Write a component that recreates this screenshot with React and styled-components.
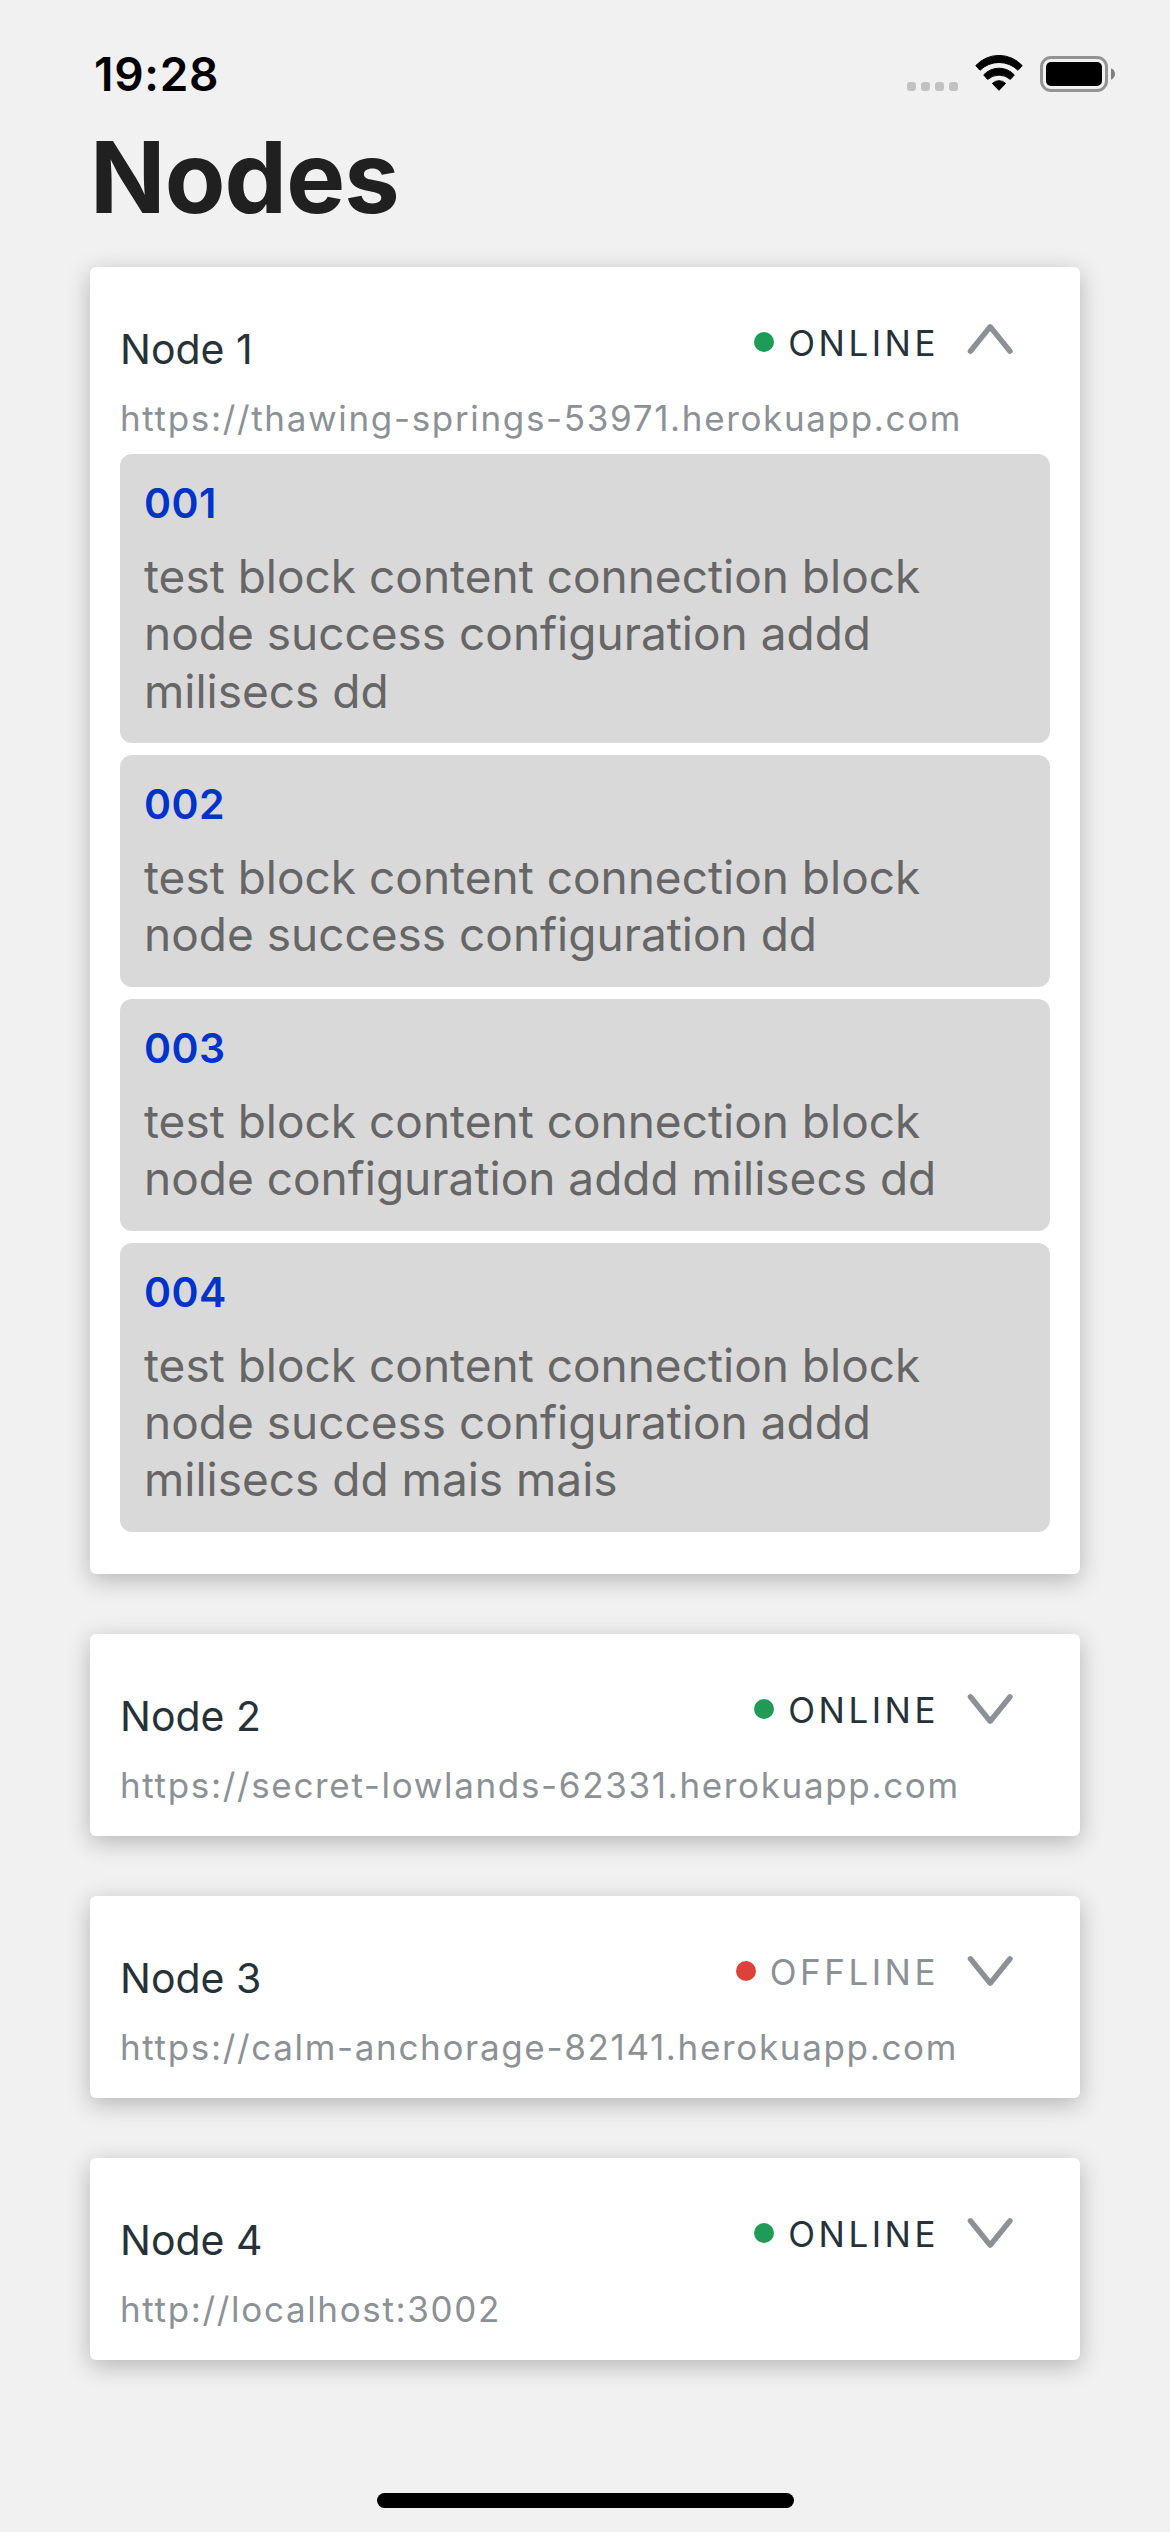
import React, { useState } from 'react';
import styled, { createGlobalStyle } from 'styled-components';

const GlobalStyle = createGlobalStyle`
  *, *::before, *::after { box-sizing: border-box; }
  body {
    margin: 0;
    background: #f1f1f1;
    font-family: Inter, "Liberation Sans", sans-serif;
  }
`;

const Screen = styled.div`
  display: flex;
  flex-direction: column;
  width: 1170px;
  height: 2532px;
  padding-bottom: 24px;
  background: #f1f1f1;
  overflow: hidden;
`;

const StatusBar = styled.header`
  display: flex;
  justify-content: space-between;
  align-items: flex-start;
  height: 117px;
  padding: 46px 55px 0 94px;
`;

const Clock = styled.time`
  font-size: 46px;
  font-weight: 600;
  line-height: 56px;
  letter-spacing: 0.7px;
  color: #000;
`;

const Indicators = styled.div`
  display: flex;
  align-items: flex-end;
  height: 46px;
`;

const SignalDots = styled.div`
  display: flex;
  gap: 5px;
  margin: 0 17px 1px 0;
`;

const SignalDot = styled.span`
  width: 9px;
  height: 9px;
  border-radius: 3px;
  background: #c2c2c2;
`;

const WifiIcon = styled.svg`
  width: 48px;
  height: 36px;
  margin: 0 17px 1px 0;
`;

const BatteryIcon = styled.svg`
  width: 75px;
  height: 36px;
`;

const Title = styled.h1`
  margin: 0 0 30px;
  padding-left: 90px;
  font-size: 99px;
  font-weight: 700;
  line-height: 120px;
  letter-spacing: -0.8px;
  color: #202020;
`;

const NodeList = styled.main`
  display: flex;
  flex-direction: column;
  gap: 60px;
  flex: 1;
  padding: 0 90px;
`;

const Card = styled.section`
  padding: 57px 30px 30px;
  border-radius: 6px;
  background: #fff;
  box-shadow: 0 6px 23px rgba(0, 0, 0, 0.25);
`;

const CardHeader = styled.div`
  display: flex;
  justify-content: space-between;
  align-items: flex-start;
  height: 50px;
`;

const NodeName = styled.h2`
  margin: 0;
  font-size: 41px;
  font-weight: 400;
  line-height: 50px;
  color: #263238;
`;

const Status = styled.div`
  display: flex;
  align-items: center;
  margin: -2px 36px 0 0;
`;

const StatusDot = styled.span`
  width: 20px;
  height: 20px;
  margin: 0 14px 2px 0;
  border-radius: 50%;
  background: ${({ $online }) => ($online ? '#1f9a57' : '#db4239')};
`;

const StatusLabel = styled.span`
  font-size: 35px;
  line-height: 42px;
  letter-spacing: 3.5px;
  color: ${({ $online }) => ($online ? '#263238' : '#8b9195')};
`;

const Toggle = styled.button`
  display: flex;
  margin: 0 0 0 27px;
  padding: 0;
  border: 0;
  background: none;
`;

const Chevron = styled.svg`
  width: 48px;
  height: 42px;
  fill: none;
  stroke: #8b9195;
  stroke-width: 5.4;
  stroke-linecap: round;
  stroke-linejoin: round;
`;

const NodeUrl = styled.p`
  margin: 23px 0 0;
  font-size: 35px;
  line-height: 42px;
  letter-spacing: 1.66px;
  color: #8b9195;
`;

const Blocks = styled.div`
  display: flex;
  flex-direction: column;
  gap: 12px;
  padding: 15px 0 12px;
`;

const Block = styled.article`
  padding: 24px 24px 19.17px;
  border-radius: 12px;
  background: #d9d9d9;
`;

const BlockId = styled.h3`
  margin: 0;
  font-size: 41px;
  font-weight: 600;
  line-height: 50px;
  letter-spacing: 0.4px;
  color: #0033cc;
`;

const BlockText = styled.p`
  margin: 20px 0 0;
  padding-bottom: 4px;
  font-size: 46px;
  line-height: 57.33px;
  color: #666;
`;

const HomeIndicator = styled.div`
  align-self: center;
  width: 417px;
  height: 15px;
  border-radius: 8px;
  background: #000;
`;

const nodes = [
  {
    name: 'Node 1',
    url: 'https://thawing-springs-53971.herokuapp.com',
    online: true,
    blocks: [
      { id: '001', text: 'test block content connection block node success configuration addd milisecs dd' },
      { id: '002', text: 'test block content connection block node success configuration dd' },
      { id: '003', text: 'test block content connection block node configuration addd milisecs dd' },
      { id: '004', text: 'test block content connection block node success configuration addd milisecs dd mais mais' },
    ],
  },
  { name: 'Node 2', url: 'https://secret-lowlands-62331.herokuapp.com', online: true, blocks: [] },
  { name: 'Node 3', url: 'https://calm-anchorage-82141.herokuapp.com', online: false, blocks: [] },
  { name: 'Node 4', url: 'http://localhost:3002', online: true, blocks: [] },
];

function NodeCard({ node, expanded, onToggle }) {
  return (
    <Card>
      <CardHeader>
        <NodeName>{node.name}</NodeName>
        <Status>
          <StatusDot $online={node.online} />
          <StatusLabel $online={node.online}>{node.online ? 'ONLINE' : 'OFFLINE'}</StatusLabel>
          <Toggle onClick={onToggle} aria-expanded={expanded}>
            <Chevron viewBox="0 0 48 42">
              <path d={expanded ? 'M4.4 29.2 24.2 4.8 44 29.2' : 'M4.4 7.8 24.2 32.2 44 7.8'} />
            </Chevron>
          </Toggle>
        </Status>
      </CardHeader>
      <NodeUrl>{node.url}</NodeUrl>
      {expanded && (
        <Blocks>
          {node.blocks.map((block) => (
            <Block key={block.id}>
              <BlockId>{block.id}</BlockId>
              <BlockText>{block.text}</BlockText>
            </Block>
          ))}
        </Blocks>
      )}
    </Card>
  );
}

export default function App() {
  const [open, setOpen] = useState('Node 1');
  return (
    <Screen>
      <GlobalStyle />
      <StatusBar>
        <Clock>19:28</Clock>
        <Indicators>
          <SignalDots>
            <SignalDot />
            <SignalDot />
            <SignalDot />
            <SignalDot />
          </SignalDots>
          <WifiIcon viewBox="0 0 48 36" fill="#000" stroke="#000" strokeWidth="1" strokeLinejoin="round">
            <path d="M.8 10.6A31.5 31.5 0 0 1 47.2 10.6L43 15.3A27 27 0 0 0 5 15.3Z" />
            <path d="M8.7 19.9A20.8 20.8 0 0 1 39.3 19.9L35.3 24.4A17 17 0 0 0 12.7 24.4Z" />
            <path d="M17.4 28.4A9.4 9.4 0 0 1 30.6 28.4L24 35.3Z" />
          </WifiIcon>
          <BatteryIcon viewBox="0 0 75 36">
            <rect x="1.5" y="1.5" width="65" height="33" rx="9.5" fill="none" stroke="#949494" strokeWidth="3" />
            <rect x="6" y="6" width="56" height="24" rx="5" fill="#000" />
            <path d="M71 12.3C73.6 13.3 75 15.6 75 18S73.6 22.7 71 23.7Z" fill="#808080" />
          </BatteryIcon>
        </Indicators>
      </StatusBar>
      <Title>Nodes</Title>
      <NodeList>
        {nodes.map((node) => (
          <NodeCard
            key={node.name}
            node={node}
            expanded={open === node.name}
            onToggle={() => setOpen(open === node.name ? null : node.name)}
          />
        ))}
      </NodeList>
      <HomeIndicator />
    </Screen>
  );
}
